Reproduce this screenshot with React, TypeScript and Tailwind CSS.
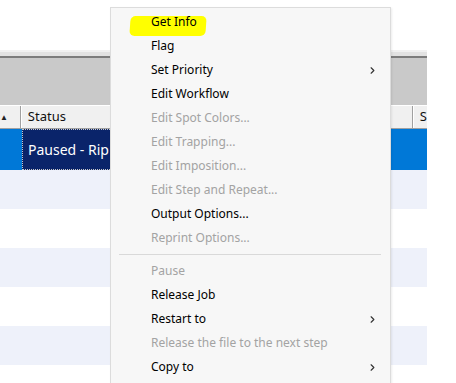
import { ChevronRight } from 'lucide-react';

type Item = { label: string; enabled: boolean; sub?: boolean } | 'sep';

const ITEMS: Item[] = [
  { label: 'Get Info', enabled: true },
  { label: 'Flag', enabled: true },
  { label: 'Set Priority', enabled: true, sub: true },
  { label: 'Edit Workflow', enabled: true },
  { label: 'Edit Spot Colors...', enabled: false },
  { label: 'Edit Trapping...', enabled: false },
  { label: 'Edit Imposition...', enabled: false },
  { label: 'Edit Step and Repeat...', enabled: false },
  { label: 'Output Options...', enabled: true },
  { label: 'Reprint Options...', enabled: false },
  'sep',
  { label: 'Pause', enabled: false },
  { label: 'Release Job', enabled: true },
  { label: 'Restart to', enabled: true, sub: true },
  { label: 'Release the file to the next step', enabled: false },
  { label: 'Copy to', enabled: true, sub: true },
  'sep',
];

// striped rows below the selected one
const ROWS = [0, 1, 2, 3, 4, 5];

function ContextMenu() {
  return (
    <div className="absolute left-[110px] top-[7px] w-[281px] border border-[#dcdcdc] bg-[#f7f7f7] pt-[2px] pb-[20px] shadow-[1px_1px_2px_rgba(0,0,0,0.08)]">
      {ITEMS.map((it, i) =>
        it === 'sep' ? (
          <div key={i} className="flex h-[9px] items-center pl-[8px] pr-[9px]">
            <div className="h-px w-full bg-[#d9d9d9]" />
          </div>
        ) : (
          <div key={i} className="relative flex h-[24px] items-center pl-[40px] pr-[12px]">
            {i === 0 && (
              <span className="absolute left-[19px] top-[6px] h-[20px] w-[76px] rounded-[5px] bg-[#ffff00] [transform:skewX(-4deg)]" />
            )}
            <span
              className={`relative flex-1 text-[12px] leading-none ${it.enabled ? 'text-black' : 'text-[#a3a3a3]'}`}
            >
              {it.label}
            </span>
            {it.sub && <ChevronRight className="h-[11px] w-[11px] text-[#333]" strokeWidth={2.5} />}
          </div>
        )
      )}
    </div>
  );
}

export default function App() {
  return (
    <div
      className="relative h-[383px] w-[456px] overflow-hidden bg-white"
      style={{ fontFamily: '"Noto Sans", "Open Sans", sans-serif' }}
    >
      <div className="w-[427px]">
        <div className="h-[50px] bg-white" />
        <div className="h-[2px] bg-[#f1f1f1]" />
        <div className="h-[4px] bg-[#e2e2e2]" />
        <div className="h-[2px] bg-[#7c7c7c]" />
        <div className="h-[47px] bg-[#c9c9c9]" />
        {/* column header */}
        <div className="flex h-[24px] border-t border-white border-b border-b-[#a0a0a0] bg-[#f0f0f0] text-[13px] text-[#111]">
          <div className="flex w-[21px] items-center border-r border-[#a0a0a0]">
            <span className="text-[8px] leading-none text-[#222]">▲</span>
          </div>
          <div className="flex w-[395px] items-center border-l border-white border-r border-r-[#a0a0a0] pl-[6px]">
            Status
          </div>
          <div className="flex flex-1 items-center border-l border-white pl-[6px]">S</div>
        </div>
        {/* selected row */}
        <div className="flex h-[41px] bg-[#0078d7]">
          <div className="w-[22px]" />
          <div className="flex w-[300px] items-center border border-dotted border-[#c8c8c8] bg-[#0a246a] pl-[5px] text-[14px] text-white">
            Paused - Rip
          </div>
        </div>
        {ROWS.map((r) => (
          <div key={r} className={`h-[39px] ${r % 2 === 0 ? 'bg-[#eef1fa]' : 'bg-white'}`} />
        ))}
      </div>
      <ContextMenu />
    </div>
  );
}
